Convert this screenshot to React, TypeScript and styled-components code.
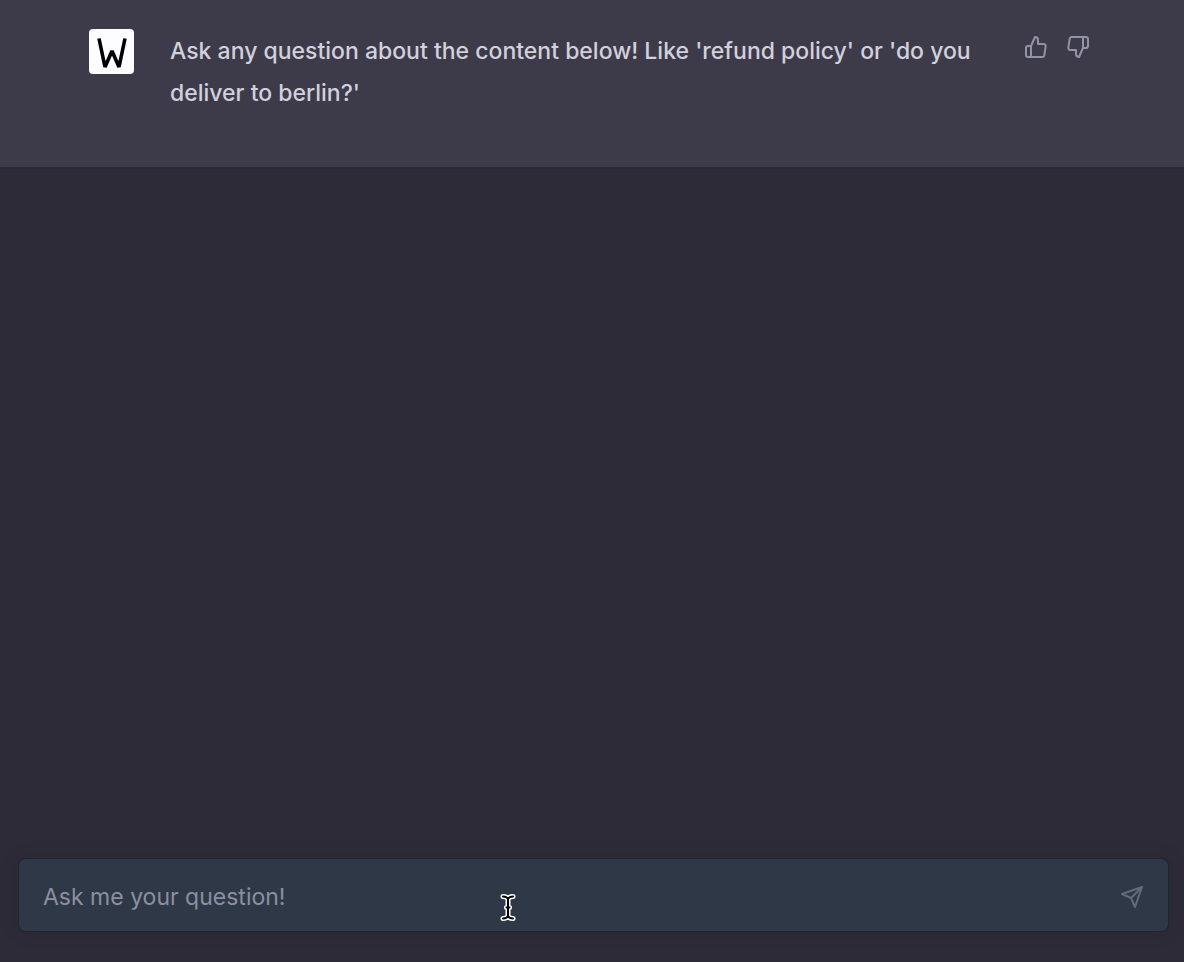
import React, { useState } from "react";
import styled, { createGlobalStyle } from "styled-components";

const GlobalStyle = createGlobalStyle`
  *, *::before, *::after { box-sizing: border-box; }
  body {
    margin: 0;
    background: #2c2b37;
    font-family: Inter, "Liberation Sans", sans-serif;
  }
`;

const Page = styled.div`
  display: flex;
  flex-direction: column;
  min-height: 100vh;
`;

const Conversation = styled.main`
  flex: 1;
`;

const Message = styled.article`
  padding: 29px 88px 53px;
  background: #3d3b49;
  border-bottom: 2px solid #292834;
`;

const MessageBody = styled.div`
  display: flex;
  align-items: flex-start;
  max-width: 1008px;
  margin: 0 auto;
  padding: 0 6px 0 1px;
`;

const Avatar = styled.div`
  flex: none;
  width: 45px;
  height: 45px;
  margin-right: 36px;
  border-radius: 4px;
  background: #fdfcff;

  svg { display: block; }
`;

const MessageText = styled.p`
  flex: 1;
  min-width: 0;
  margin: 0;
  padding-top: 1px;
  color: #d1d0dc;
  font-size: 23px;
  font-weight: 500;
  line-height: 42px;
`;

const Actions = styled.div`
  display: flex;
  flex: none;
  gap: 18px;
  margin-left: 32px;
  padding-top: 6px;
`;

const IconButton = styled.button`
  display: flex;
  flex: none;
  padding: 0;
  border: 0;
  background: none;
  color: ${(p) => p.color};
  cursor: pointer;
`;

const Footer = styled.footer`
  padding: 0 15px 30px 18px;
`;

const Composer = styled.form`
  position: relative;
  display: flex;
  align-items: center;
  height: 74px;
  padding: 4px 24px 0;
  border: 1px solid #1f2635;
  border-radius: 8px;
  background: #2f3847;
  box-shadow: 0 0 20px rgba(0, 0, 0, 0.1);
`;

const QuestionInput = styled.input`
  flex: 1;
  min-width: 0;
  height: 42px;
  padding: 0;
  border: 0;
  outline: 0;
  background: none;
  color: #d1d0dc;
  font: inherit;
  font-size: 23px;
  line-height: 42px;

  &::placeholder { color: #8c8fa0; opacity: 1; }
`;

const Pointer = styled.svg`
  position: absolute;
  left: 479px;
  top: 33px;
  pointer-events: none;
`;

const Logo = () => (
  <svg width="45" height="45" viewBox="0 0 45 45" role="img" aria-label="W">
    <polyline points="10,9.5 16,38 23,22 30,38 36,9.5" fill="none" stroke="#000" strokeWidth="3.6" strokeLinejoin="bevel" />
  </svg>
);

const Icon = ({ children }: { children: React.ReactNode }) => (
  <svg
    width="24"
    height="24"
    viewBox="0 0 24 24"
    fill="none"
    stroke="currentColor"
    strokeWidth="2"
    strokeLinecap="round"
    strokeLinejoin="round"
    aria-hidden="true"
  >
    {children}
  </svg>
);

const beam = "M5 4.5C7.5 4.500 9.500 5.500 10 7.500C10.500 5.500 12.500 4.500 15 4.500M10 7V24M8.500 15.500H11.500M5 26.500C7.500 26.500 9.500 25.500 10 23.500C10.500 25.500 12.500 26.500 15 26.500";

export default function App() {
  const [question, setQuestion] = useState("");

  return (
    <Page>
      <GlobalStyle />
      <Conversation>
        <Message>
          <MessageBody>
            <Avatar>
              <Logo />
            </Avatar>
            <MessageText>
              Ask any question about the content below! Like 'refund policy' or 'do you deliver to berlin?'
            </MessageText>
            <Actions>
              <IconButton type="button" color="#9293a3" aria-label="Good answer">
                <Icon>
                  <path d="M14 9V5a3 3 0 0 0-3-3l-4 9v11h11.28a2 2 0 0 0 2-1.7l1.38-9a2 2 0 0 0-2-2.3zM7 22H4a2 2 0 0 1-2-2v-7a2 2 0 0 1 2-2h3" />
                </Icon>
              </IconButton>
              <IconButton type="button" color="#9293a3" aria-label="Bad answer">
                <Icon>
                  <path d="M10 15v4a3 3 0 0 0 3 3l4-9V2H5.72a2 2 0 0 0-2 1.7l-1.38 9a2 2 0 0 0 2 2.3zM17 2h2.67A2.310 2.310 0 0 1 22 4v7a2.310 2.310 0 0 1-2.330 2H17" />
                </Icon>
              </IconButton>
            </Actions>
          </MessageBody>
        </Message>
      </Conversation>
      <Footer>
        <Composer onSubmit={(e) => e.preventDefault()}>
          <QuestionInput
            type="text"
            aria-label="Your question"
            placeholder="Ask me your question!"
            value={question}
            onChange={(e) => setQuestion(e.target.value)}
          />
          <IconButton type="submit" color="#646a7a" aria-label="Send">
            <Icon>
              <path d="M22 2L11 13M22 2l-7 20-4-9-9-4 20-7z" />
            </Icon>
          </IconButton>
          <Pointer width="20" height="31" viewBox="0 0 20 31" fill="none" strokeLinecap="round" aria-hidden="true">
            <path d={beam} stroke="#fff" strokeWidth="5" />
            <path d={beam} stroke="#000" strokeWidth="2" />
          </Pointer>
        </Composer>
      </Footer>
    </Page>
  );
}
